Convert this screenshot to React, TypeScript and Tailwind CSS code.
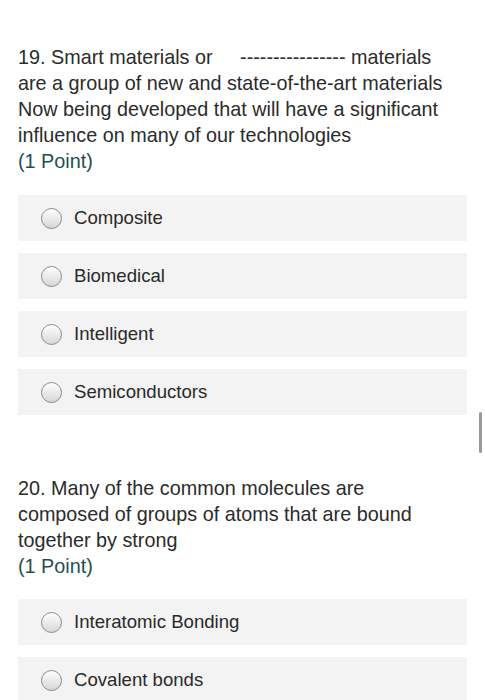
import React from 'react';

const q19 = ['Composite', 'Biomedical', 'Intelligent', 'Semiconductors'];
const q20 = ['Interatomic Bonding', 'Covalent bonds'];

function Radio() {
	return (
		<span className="w-[21px] h-[21px] rounded-full border border-[#8a8a8a] bg-gradient-to-b from-white to-[#d6d6d6] shrink-0" />
	);
}

function Option({ label }: { label: string }) {
	return (
		<div className="h-[46px] bg-[#f3f3f3] flex items-center pl-[23px] gap-[12px]">
			<Radio />
			<span className="text-[18.6px] text-[#2a2a2a]">{label}</span>
		</div>
	);
}

export default function App() {
	return (
		<div
			className="relative w-[485px] h-[700px] overflow-hidden bg-white"
			style={{ fontFamily: '"Liberation Sans", Arial, sans-serif' }}
		>
			<div className="pl-[18px] pr-[18px] pt-[44px]">
				<div className="text-[19.8px] leading-[26px] text-[#2b2b2b] whitespace-nowrap">
					<p>
						19. Smart materials or <span className="ml-[22px]">----------------</span>{' '}
						materials
						<br />
						are a group of new and state-of-the-art materials
						<br />
						Now being developed that will have a significant
						<br />
						influence on many of our technologies
					</p>
					<p className="text-[#1f4f52]">(1 Point)</p>
				</div>
				<div className="mt-[21px] flex flex-col gap-[12px]">
					{q19.map((o) => (
						<Option key={o} label={o} />
					))}
				</div>

				<div className="mt-[60px] text-[19.8px] leading-[26px] text-[#2b2b2b] whitespace-nowrap">
					<p>
						20. Many of the common molecules are
						<br />
						composed of groups of atoms that are bound
						<br />
						together by strong
					</p>
					<p className="text-[#1f4f52]">(1 Point)</p>
				</div>
				<div className="mt-[20px] flex flex-col gap-[12px]">
					{q20.map((o) => (
						<Option key={o} label={o} />
					))}
				</div>
			</div>
			<div className="absolute left-[479px] top-[412px] w-[3px] h-[41px] rounded bg-[#9a9a9a]" />
		</div>
	);
}
